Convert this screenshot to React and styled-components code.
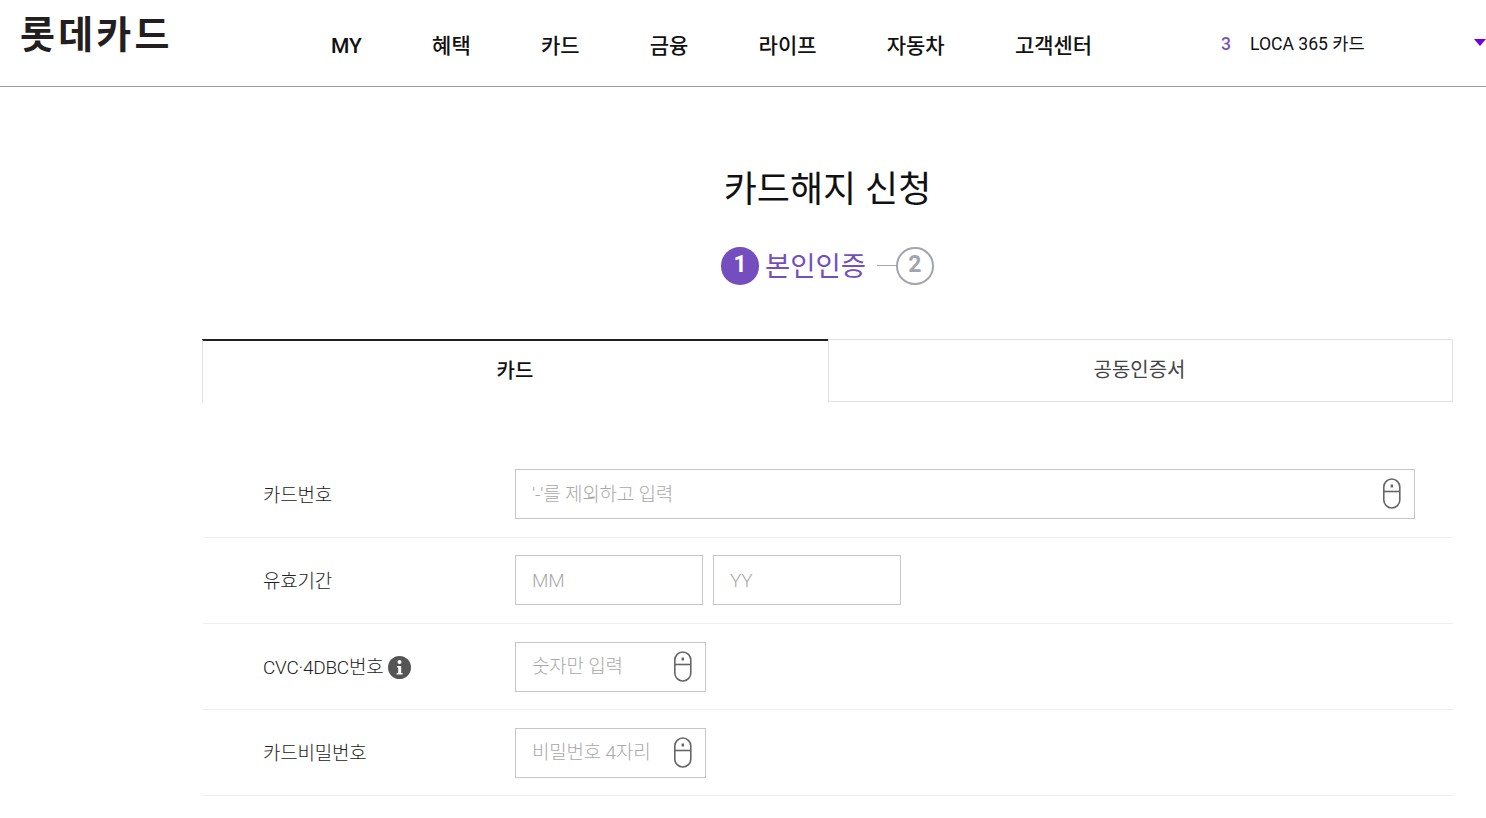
import React from "react";
import styled, { createGlobalStyle } from "styled-components";

const Global = createGlobalStyle`
  html, body { margin: 0; padding: 0; background: #fff; }
  body { font-family: Roboto, "Noto Sans CJK KR", sans-serif; color: #111; overflow: hidden; height: 818px; }
  * { box-sizing: border-box; }
`;

const Header = styled.header`
  height: 87px;
  border-bottom: 1px solid #9a97a8;
  display: flex;
  position: relative;
`;
const Logo = styled.div`
  width: 331px;
  padding: 5px 0 0 20px;
  font: 700 38px/54px "Noto Sans CJK KR", sans-serif;
  letter-spacing: 3.2px;
  color: #231f20;
  white-space: nowrap;
`;
const Nav = styled.nav`
  display: flex;
  gap: 70.2px;
  padding-top: 31px;
  width: 890px;
`;
const NavItem = styled.a`
  font: 500 21px/30px Roboto, "Noto Sans CJK KR", sans-serif;
  color: #111;
  white-space: nowrap;
`;
const CardSelect = styled.div`
  flex: 1;
  display: flex;
  gap: 19px;
  padding-top: 31px;
  font: 400 17.6px/27px Roboto, "Noto Sans CJK KR", sans-serif;
  color: #111;
  position: relative;
`;
const Count = styled.span`
  color: #7a52c0;
  font-weight: 500;
`;
const Caret = styled.span`
  position: absolute;
  right: 0;
  top: 39px;
  width: 0;
  height: 0;
  border-left: 6px solid transparent;
  border-right: 6px solid transparent;
  border-top: 7px solid #7000e0;
`;

const Main = styled.main`
  padding: 0 33px 0 202px;
`;
const Title = styled.h1`
  margin: 0;
  padding-top: 78px;
  text-align: center;
  font: 400 36px/50px Roboto, "Noto Sans CJK KR", sans-serif;
  color: #111;
  width: 1251px;
`;
const Steps = styled.ol`
  list-style: none;
  margin: 0;
  padding: 32px 0 0;
  display: flex;
  justify-content: center;
  align-items: flex-start;
  height: 124px;
`;
const StepDot = styled.span`
  width: 37.5px;
  height: 37.5px;
  border-radius: 50%;
  display: flex;
  align-items: center;
  justify-content: center;
  padding-bottom: 2px;
  font: 700 23px/1 Roboto, sans-serif;
  color: ${(p) => (p.$on ? "#fff" : "#a2a5ad")};
  background: ${(p) => (p.$on ? "#744ebf" : "#fff")};
  border: ${(p) => (p.$on ? "none" : "2px solid #a2a5ad")};
`;
const StepLabel = styled.span`
  font: 400 27.5px/38px Roboto, "Noto Sans CJK KR", sans-serif;
  color: #744ebf;
  margin: 0 0 0 6px;
  padding-top: 1px;
`;
const StepLine = styled.span`
  width: 19px;
  height: 1px;
  background: #a2a5ad;
  margin: 18px 0 0 11px;
`;

const Tabs = styled.div`
  display: flex;
  height: 63px;
  margin-bottom: 50px;
`;
const Tab = styled.div`
  flex: 0 0 ${(p) => (p.$active ? 626 : 625)}px;
  display: flex;
  align-items: center;
  justify-content: center;
  padding: ${(p) => (p.$active ? "0 1px 1px 0" : "0 2px 1px 0")};
  font: ${(p) => (p.$active ? 500 : 400)} 20px/28px Roboto, "Noto Sans CJK KR", sans-serif;
  color: ${(p) => (p.$active ? "#111" : "#444")};
  border-top: ${(p) => (p.$active ? "2px solid #222" : "1px solid #e2e2e2")};
  border-left: 1px solid #e2e2e2;
  border-right: ${(p) => (p.$active ? "none" : "1px solid #e2e2e2")};
  border-bottom: ${(p) => (p.$active ? "none" : "1px solid #e2e2e2")};
`;
const Label = styled.label`
  width: 312px;
  padding-left: 60px;
  display: flex;
  align-items: center;
  gap: 5px;
  color: #222;
`;
const LabelText = styled.span`
  font: 300 19px/28px Roboto, "Noto Sans CJK KR", sans-serif;
  letter-spacing: -0.25px;
  padding-top: 4px;
`;
const Placeholder = styled.span`
  font: 300 19px/28px Roboto, "Noto Sans CJK KR", sans-serif;
  color: #a9a9a9;
  margin-top: 1px;
  letter-spacing: -0.2px;
  white-space: nowrap;
`;
const Row = styled.div`
  display: flex;
  align-items: center;
  margin-left: 1px;
  padding: ${(p) => (p.$low ? "18px 0 17px" : "17px 0 18px")};
  border-bottom: 1px solid #efefef;
  ${LabelText} { padding-top: ${(p) => (p.$low ? 2 : 4)}px; }
  ${Placeholder} { margin-top: ${(p) => (p.$low ? -1 : 1)}px; }
`;
const Fields = styled.div`
  display: flex;
  gap: 10px;
`;
const Field = styled.div`
  width: ${(p) => p.$w}px;
  height: 50px;
  border: 1px solid #c6c6c6;
  padding: 0 13px 0 16px;
  display: flex;
  align-items: center;
  justify-content: space-between;
`;
const InfoBadge = styled.span`
  width: 23px;
  height: 23px;
  border-radius: 50%;
  background: #555;
  color: #fff;
  display: flex;
  align-items: center;
  justify-content: center;
`;

const MouseIcon = () => (
  <svg width="18" height="32" viewBox="0 0 18 32" fill="none" stroke="#666" strokeWidth="1.6">
    <rect x="0.8" y="1" width="16" height="29" rx="8" />
    <path d="M1 13.5H17" />
    <path d="M8.8 6.5V9.5" strokeWidth="2.4" />
  </svg>
);
const InfoIcon = () => (
  <svg width="7" height="15" viewBox="0 0 7 15" fill="#fff">
    <circle cx="3.5" cy="2" r="2" />
    <path d="M1 6h4.2v7H6.6v1.6H.6V13h1.6V7.6H1z" />
  </svg>
);

const nav = ["MY", "혜택", "카드", "금융", "라이프", "자동차", "고객센터"];

export default function App() {
  return (
    <>
      <Global />
      <Header>
        <Logo>롯데카드</Logo>
        <Nav>
          {nav.map((n) => (
            <NavItem key={n}>{n}</NavItem>
          ))}
        </Nav>
        <CardSelect>
          <Count>3</Count>
          <span>LOCA 365 카드</span>
          <Caret />
        </CardSelect>
      </Header>
      <Main>
        <Title>카드해지 신청</Title>
        <Steps>
          <StepDot $on>1</StepDot>
          <StepLabel>본인인증</StepLabel>
          <StepLine />
          <StepDot>2</StepDot>
        </Steps>
        <Tabs>
          <Tab $active>카드</Tab>
          <Tab>공동인증서</Tab>
        </Tabs>
        <Row>
          <Label><LabelText>카드번호</LabelText></Label>
          <Field $w={900}>
            <Placeholder>'-'를 제외하고 입력</Placeholder>
            <MouseIcon />
          </Field>
        </Row>
        <Row>
          <Label><LabelText>유효기간</LabelText></Label>
          <Fields>
            <Field $w={188}><Placeholder>MM</Placeholder></Field>
            <Field $w={188}><Placeholder>YY</Placeholder></Field>
          </Fields>
        </Row>
        <Row $low>
          <Label>
            <LabelText>CVC·4DBC번호</LabelText>
            <InfoBadge><InfoIcon /></InfoBadge>
          </Label>
          <Field $w={191}>
            <Placeholder>숫자만 입력</Placeholder>
            <MouseIcon />
          </Field>
        </Row>
        <Row $low>
          <Label><LabelText>카드비밀번호</LabelText></Label>
          <Field $w={191}>
            <Placeholder>비밀번호 4자리</Placeholder>
            <MouseIcon />
          </Field>
        </Row>
      </Main>
    </>
  );
}
